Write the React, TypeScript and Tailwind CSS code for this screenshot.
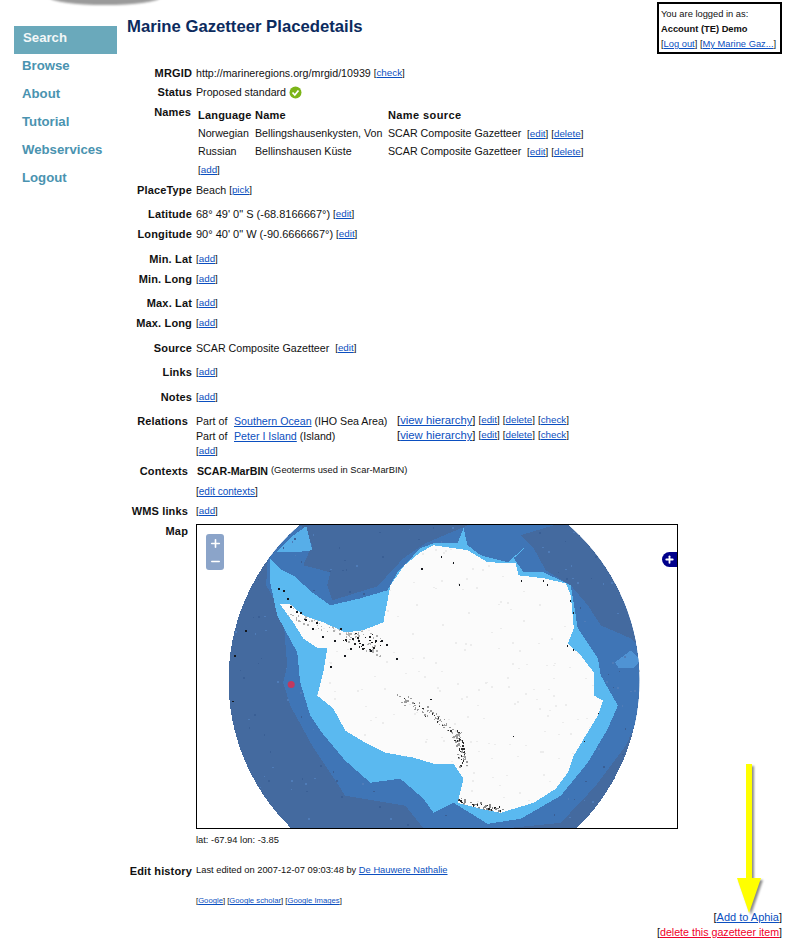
import React from 'react';
import { Plus, Minus } from 'lucide-react';

const Lnk = ({ children, size = 'text-[9.8px]', red = false }: { children: React.ReactNode; size?: string; red?: boolean }) => (
  <span className={size}>
    [<a href="#" className={red ? 'text-[#f0002a] underline' : 'text-[#0b4fc0] underline'}>{children}</a>]
  </span>
);

const Row = ({ label, gap, lh = 'pr-0', children }: { label: string; gap: string; lh?: string; children?: React.ReactNode }) => (
  <div className={`flex h-4 items-center ${gap}`}>
    <div className={`flex w-[72px] shrink-0 justify-end whitespace-nowrap text-[11px] font-bold tracking-[0.15px] ${lh}`}>{label}</div>
    <div className="ml-1 flex items-center whitespace-nowrap">{children}</div>
  </div>
);

const navItems = ['Browse', 'About', 'Tutorial', 'Webservices', 'Logout'];

// small seeded generator so the map noise stays the same between runs
const noise = (count: number, seed: number) => {
  let s = seed;
  const next = () => {
    s = (s * 16807) % 2147483647;
    return s / 2147483647;
  };
  return Array.from({ length: count }, () => [next(), next()]);
};

const MapDrawing = () => {
  const land =
    'M280 604 L290 604 L303 615 L323 622 L345 632 L362 630 L383 622 L390 585 L404 565 L420 552 L433 545 L467 550 L487 562 L515 563 L518 575 L543 578 L565 583 L570 595 L573 628 L567 643 L580 655 L593 672 L593 695 L602 700 L597 715 L583 738 L573 755 L567 772 L555 788 L533 802 L500 812 L480 808 L457 802 L463 778 L453 763 L433 763 L413 757 L385 752 L365 742 L345 730 L333 708 L317 695 L323 672 L327 648 L318 648 L303 638 L293 622 Z';
  const shelf =
    'M270 558 L282 570 L293 575 L312 592 L330 605 L360 598 L387 590 L397 572 L420 548 L433 543 L457 543 L463 528 L467 545 L480 555 L507 562 L530 542 L513 558 L523 572 L543 572 L570 585 L577 628 L597 658 L600 675 L617 705 L607 728 L587 762 L560 795 L520 818 L487 823 L453 802 L433 812 L423 798 L400 778 L370 782 L345 760 L320 730 L310 715 L300 682 L297 652 L277 615 L270 582 Z';
  const mid =
    'M268 552 L285 535 L303 524 L560 524 L600 560 L645 640 L645 700 L625 745 L595 785 L560 822 L480 830 L425 830 L405 805 L345 795 L312 745 L290 705 L283 682 L287 665 L283 615 L266 585 Z';
  const rocks = [
    [283, 590], [287, 598], [278, 588], [296, 611], [305, 619], [312, 628], [322, 636], [334, 640], [350, 648], [344, 655], [330, 666],
    [381, 640], [386, 644], [396, 658], [358, 640], [421, 568], [440, 556], [452, 562], [542, 580], [546, 584], [569, 600], [572, 612],
    [566, 645], [572, 649], [583, 740], [597, 712], [245, 630], [234, 655], [232, 700], [631, 604], [638, 670], [635, 735], [512, 735],
    [430, 698], [458, 584], [520, 580], [352, 638], [362, 644], [370, 650], [375, 640], [340, 628], [316, 622], [300, 612], [290, 606],
  ];
  const coastNoise = noise(150, 7);
  const oceanNoise = noise(260, 31);
  const landNoise = noise(240, 93);
  return (
    <svg viewBox="197 525 479 302" className="block h-full w-full" shapeRendering="crispEdges">
      <defs>
        <clipPath id="globe"><circle cx="433.5" cy="680" r="205" /></clipPath>
        <clipPath id="landClip"><path d={land} /></clipPath>
      </defs>
      <circle cx="433.5" cy="680" r="205" fill="#446a9f" />
      <g clipPath="url(#globe)">
        <path d={mid} fill="#3f75b6" />
        <path d="M303 565 L330 572 L327 585 L332 600 L377 586 L403 558 L425 543 L470 524 L300 524 L312 545 Z" fill="#446a9f" />
        <path d="M520 535 L533 548 L545 570 L570 585 L587 605 L600 625 L630 638 L642 650 L645 560 L570 520 Z" fill="#446a9f" />
        <path d="M276 552 L292 536 L306 526 L312 550 L296 552 Z" fill="#57aee8" />
        <path d="M614 662 L630 650 L640 660 L632 668 L618 668 Z" fill="#4f93d4" />
        {oceanNoise.map(([a, b], i) => (
          <rect key={i} x={230 + a * 410} y={525 + b * 302} width="1.5" height="1.5" fill={i % 2 ? '#3a5f95' : '#4f7cb8'} />
        ))}
        <path d={shelf} fill="#5ab9f0" />
        <path d={land} fill="#fbfbfb" />
        <g clipPath="url(#landClip)">
          {landNoise.map(([a, b], i) => (
            <rect key={i} x={300 + a * 300} y={545 + b * 270} width="2" height="1.5" fill="#ececec" />
          ))}
          {/* dark mountain band through the ice */}
          {coastNoise.map(([a, b], i) => {
            const t = a * 3;
            const pts = [[400, 697], [433, 715], [457, 735], [462, 762], [467, 782]];
            const k = Math.min(Math.floor(t), 2);
            const f = t - k;
            const x = pts[k][0] + (pts[k + 1][0] - pts[k][0]) * f + (b - 0.5) * 8;
            const y = pts[k][1] + (pts[k + 1][1] - pts[k][1]) * f + ((b * 13) % 1 - 0.5) * 8;
            return <rect key={i} x={x} y={y} width="1.5" height="1.5" fill={i % 4 ? '#9c9c9c' : '#2e2e2e'} />;
          })}
          {coastNoise.map(([a, b], i) => (
            <rect key={i} x={285 + a * 95} y={606 + a * 40 + (b - 0.5) * 20} width="1.5" height="1.5" fill={i % 4 ? '#b0b0b0' : '#222'} />
          ))}
          {coastNoise.slice(0, 70).map(([a, b], i) => (
            <rect key={i} x={457 + a * 45} y={796 + a * 10 + b * 10} width="1.5" height="1.5" fill={i % 3 ? '#888' : '#222'} />
          ))}
        </g>
        {rocks.map(([x, y]) => (
          <rect key={`${x}-${y}`} x={x} y={y} width="1.5" height="1.5" fill="#15181d" />
        ))}
      </g>
      <circle cx="291" cy="684" r="3.5" fill="#c2395f" shapeRendering="auto" />
    </svg>
  );
};

const ArrowDrawing = () => (
  <svg width="36" height="156" viewBox="0 0 36 156" className="absolute left-[735px] top-[762px] drop-shadow-[2px_2px_1px_rgba(0,0,0,0.45)]">
    <path d="M11 2 H17 V116 H26 L14 151 L2 116 H11 Z" fill="#ffff00" />
  </svg>
);

export default function App() {
  return (
    <div className="relative flex h-[941px] w-[809px] overflow-hidden bg-white font-['Liberation_Sans',Arial,sans-serif] text-[10.67px] text-[#111]">
      {/* cut off logo shadow */}
      <div className="absolute left-[50px] top-[-10px] h-[15px] w-[110px] rounded-[50%] bg-[#9a9a9a] blur-[1px]" />

      <nav className="w-[120px] shrink-0 pl-[14px] pt-[26px] text-[13.2px] font-bold">
        <div className="flex h-7 w-[103px] items-center bg-[#6aa9bb] pb-[5px] pl-[9px] text-[#f2f7f8]">Search</div>
        {navItems.map((n) => (
          <div key={n} className="flex h-7 items-center pb-[5px] pl-2 text-[#4a93b0]">{n}</div>
        ))}
      </nav>

      <main className="w-[662px] shrink-0 pt-[2px]">
        <header className="flex h-[52px] items-start justify-between">
          <h1 className="ml-[7px] mt-[14px] text-[16.7px] font-bold leading-[22px] text-[#0c2b5e]">Marine Gazetteer Placedetails</h1>
          <div className="h-[52px] w-[125px] border-2 border-black pl-[2px] pt-[3px] text-[9.33px] leading-[15px]">
            <div>You are logged in as:</div>
            <div className="font-bold">Account (TE) Demo</div>
            <div className="whitespace-nowrap"><Lnk size="text-[9.33px]">Log out</Lnk> <Lnk size="text-[9.33px]">My Marine Gaz...</Lnk></div>
          </div>
        </header>

        <Row label="MRGID" gap="mt-[11px]">
          http://marineregions.org/mrgid/10939&nbsp;<Lnk>check</Lnk>
        </Row>
        <Row label="Status" gap="mt-[3px]">
          Proposed standard
          <svg width="13" height="13" viewBox="0 0 13 13" className="ml-[3px]">
            <circle cx="6.5" cy="6.5" r="6" fill="#7cb518" />
            <path d="M3.5 6.5 L5.8 9 L9.5 4.5" fill="none" stroke="#fff" strokeWidth="1.8" />
          </svg>
        </Row>

        <div className="mt-1 flex h-[72px]">
          <div className="w-[71px] shrink-0 text-right text-[11px] font-bold leading-4 tracking-[0.15px]">Names</div>
          <div className="ml-[7px] mt-[2px] grid grid-cols-[57px_133px_139px_auto] grid-rows-[18px_18px_18px_18px] items-center whitespace-nowrap">
            <b className="text-[11px] tracking-[0.2px]">Language</b><b className="text-[11px] tracking-[0.2px]">Name</b><b className="text-[11px] tracking-[0.4px]">Name source</b><span />
            <span>Norwegian</span><span>Bellingshausenkysten, Von</span><span>SCAR Composite Gazetteer</span><span><Lnk>edit</Lnk> <Lnk>delete</Lnk></span>
            <span>Russian</span><span>Bellinshausen Küste</span><span>SCAR Composite Gazetteer</span><span><Lnk>edit</Lnk> <Lnk>delete</Lnk></span>
            <span><Lnk>add</Lnk></span>
          </div>
        </div>

        <Row label="PlaceType" gap="mt-[6px]">Beach&nbsp;<Lnk>pick</Lnk></Row>
        <Row label="Latitude" gap="mt-2"><span className="text-[11px]">68° 49' 0" S (-68.8166667°)</span>&nbsp;<Lnk>edit</Lnk></Row>
        <Row label="Longitude" gap="mt-1"><span className="text-[11px]">90° 40' 0" W (-90.6666667°)</span>&nbsp;<Lnk>edit</Lnk></Row>
        <Row label="Min. Lat" gap="mt-[9px]"><Lnk>add</Lnk></Row>
        <Row label="Min. Long" gap="mt-1"><Lnk>add</Lnk></Row>
        <Row label="Max. Lat" gap="mt-2"><Lnk>add</Lnk></Row>
        <Row label="Max. Long" gap="mt-1"><Lnk>add</Lnk></Row>
        <Row label="Source" gap="mt-[9px]">SCAR Composite Gazetteer&nbsp;&nbsp;<Lnk>edit</Lnk></Row>
        <Row label="Links" gap="mt-2"><Lnk>add</Lnk></Row>
        <Row label="Notes" gap="mt-[9px]"><Lnk>add</Lnk></Row>

        <div className="mt-2 flex h-[46px]">
          <div className="w-[68px] shrink-0 text-right text-[11px] font-bold leading-4 tracking-[0.15px]">Relations</div>
          <div className="ml-2 grid grid-cols-[38px_163px_auto] grid-rows-[15px_15px_15px] items-center whitespace-nowrap">
            <span>Part of</span>
            <span><a href="#" className="text-[#0b4fc0] underline">Southern Ocean</a> (IHO Sea Area)</span>
            <span className="flex items-center gap-[3px]"><Lnk size="text-[11.3px]">view hierarchy</Lnk> <Lnk>edit</Lnk> <Lnk>delete</Lnk> <Lnk>check</Lnk></span>
            <span>Part of</span>
            <span><a href="#" className="text-[#0b4fc0] underline">Peter I Island</a> (Island)</span>
            <span className="flex items-center gap-[3px]"><Lnk size="text-[11.3px]">view hierarchy</Lnk> <Lnk>edit</Lnk> <Lnk>delete</Lnk> <Lnk>check</Lnk></span>
            <span><Lnk>add</Lnk></span>
          </div>
        </div>

        <Row label="Contexts" gap="mt-[4px]" lh="pr-1">
          <b className="ml-[1px] text-[10.67px]">SCAR-MarBIN</b>&nbsp;<span className="text-[9.33px]">(Geoterms used in Scar-MarBIN)</span>
        </Row>
        <Row label="" gap="mt-1"><Lnk size="text-[10px]">edit contexts</Lnk></Row>
        <Row label="WMS links" gap="mt-1" lh="pr-1"><Lnk>add</Lnk></Row>

        <div className="mt-[5px] flex">
          <div className="w-[68px] shrink-0 text-right text-[11px] font-bold leading-[14px] tracking-[0.15px]">Map</div>
          <div className="relative ml-2 h-[305px] w-[482px] border border-black bg-white">
            <MapDrawing />
            <div className="absolute left-[9px] top-[9px] flex h-9 w-[18px] flex-col items-center justify-around rounded-[3px] bg-[#8ba4c9] text-white">
              <Plus size={13} strokeWidth={3} />
              <Minus size={13} strokeWidth={2.5} />
            </div>
            <div className="absolute right-0 top-[27px] flex h-[15px] w-[15px] items-center justify-center rounded-l-full bg-[#00008b] text-white">
              <Plus size={11} strokeWidth={4} />
            </div>
          </div>
        </div>

        <Row label="" gap="mt-[4px]"><span className="text-[9.33px]">lat: -67.94 lon: -3.85</span></Row>
        <Row label="Edit history" gap="mt-[14px]">
          <span className="text-[9.33px]">Last edited on 2007-12-07 09:03:48 by <a href="#" className="text-[#0b4fc0] underline">De Hauwere Nathalie</a></span>
        </Row>
        <Row label="" gap="mt-[14px]">
          <span className="text-[7.7px]"><Lnk size="text-[7.7px]">Google</Lnk> <Lnk size="text-[7.7px]">Google scholar</Lnk> <Lnk size="text-[7.7px]">Google Images</Lnk></span>
        </Row>

        <div className="mt-[1px] text-right leading-[15px]">
          <div><Lnk size="text-[11px]">Add to Aphia</Lnk></div>
          <div><Lnk size="text-[10.67px]" red>delete this gazetteer item</Lnk></div>
        </div>
      </main>

      <ArrowDrawing />
    </div>
  );
}
